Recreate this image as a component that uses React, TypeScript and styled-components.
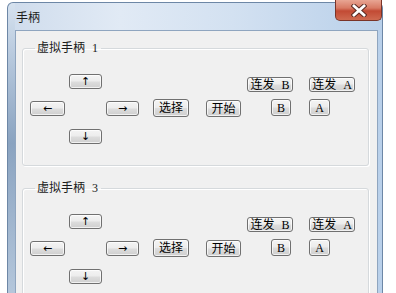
import React from 'react';
import styled, { createGlobalStyle } from 'styled-components';

const GlobalStyle = createGlobalStyle`
    html, body {
        margin: 0;
        padding: 0;
        background: #ffffff;
        overflow: hidden;
    }
`;

const Page = styled.div`
    width: 396px;
    height: 293px;
    padding: 2px 0 0 7px;
    box-sizing: border-box;
`;

const Window = styled.div`
    position: relative;
    width: 376px;
    height: 310px;
    display: flex;
    flex-direction: column;
    border: 1px solid #6d87a6;
    border-bottom: none;
    border-radius: 6px 6px 0 0;
    box-sizing: border-box;
    background:
        linear-gradient(180deg, #d6e2ef 0px, #b4c6db 60px, #8aa3c0 140px, #b7c9dd 300px) left top / 7px 100% no-repeat,
        linear-gradient(90deg, #cfdcec 0%, #e1eaf5 30%, #d3e1f1 60%, #b9d0ea 100%);
`;

const TitleBar = styled.div`
    height: 27px;
    display: flex;
    align-items: center;
    padding-left: 8px;
    font-family: 'Noto Sans CJK SC', sans-serif;
    font-size: 12px;
    color: #1e1e1e;
`;

const CloseButton = styled.div`
    position: absolute;
    top: -3px;
    right: 0;
    width: 47px;
    height: 21px;
    box-sizing: border-box;
    border: 1px solid #7a3428;
    border-top: none;
    border-radius: 0 0 5px 5px;
    background: linear-gradient(180deg, #e8a593 0%, #d87a64 40%, #c24a34 55%, #cf6a50 100%);
    display: flex;
    justify-content: center;
    align-items: center;
`;

const Client = styled.div`
    flex: 1;
    margin: 0 4px 0 7px;
    background: #f0f0f0;
    border: 1px solid #8fa5bf;
    border-bottom: none;
    padding: 10px 8px 0 6px;
    display: flex;
    flex-direction: column;
    gap: 15px;
`;

const Group = styled.fieldset`
    margin: 0;
    padding: 19px 0 21px 7px;
    border: 1px solid #d5d9dc;
    border-radius: 3px;
    box-shadow: inset 1px 1px 0 #ffffff, 1px 1px 0 #ffffff;
    min-width: 0;
`;

const Legend = styled.legend`
    margin-left: 5px;
    padding: 0 3px 0 2px;
    font-family: 'Liberation Serif', 'Noto Sans CJK SC', serif;
    font-size: 12px;
    line-height: 14px;
    word-spacing: 4px;
    color: #1a1a1a;
`;

const Pad = styled.div`
    display: flex;
    align-items: flex-start;
`;

const DPad = styled.div`
    display: grid;
    grid-template-columns: 35px 33px 33px;
    grid-template-rows: 15px 16px 15px;
    column-gap: 4px;
    row-gap: 12px;
`;

const Slot = styled.div<{ $col: number; $row: number }>`
    grid-column: ${(p) => p.$col};
    grid-row: ${(p) => p.$row};
    display: flex;
`;

const Button = styled.div<{ $w: number; $h: number }>`
    width: ${(p) => p.$w}px;
    height: ${(p) => p.$h}px;
    box-sizing: border-box;
    border: 1px solid #707070;
    border-radius: 3px;
    background: linear-gradient(180deg, #f4f4f4 0%, #ececec 48%, #dddddd 52%, #cfcfcf 100%);
    box-shadow: inset 0 0 0 1px rgba(255, 255, 255, 0.7);
    display: flex;
    justify-content: center;
    align-items: center;
    font-family: 'Liberation Serif', 'Noto Sans CJK SC', serif;
    font-size: 12px;
    line-height: 1;
    word-spacing: 4px;
    color: #000000;
    white-space: pre;
`;

const Arrow = styled.span`
    font-family: 'DejaVu Sans', sans-serif;
    font-size: 11px;
    line-height: 1;
`;

const Action = styled.div<{ $left: number; $top: number }>`
    margin-left: ${(p) => p.$left}px;
    margin-top: ${(p) => p.$top}px;
`;

const Turbo = styled.div`
    margin-left: 6px;
    margin-top: 3px;
    display: grid;
    grid-template-columns: 46px 46px;
    grid-template-rows: 15px 17px;
    column-gap: 16px;
    row-gap: 7px;
`;

const TurboCell = styled.div<{ $end?: boolean }>`
    display: flex;
    justify-content: ${(p) => (p.$end ? 'flex-end' : 'flex-start')};
    padding-right: ${(p) => (p.$end ? 2 : 0)}px;
`;

function CloseIcon() {
    return (
        <svg width="16" height="13" viewBox="0 0 16 13">
            <path d="M3 2 L13 11 M13 2 L3 11" stroke="#5a2a22" strokeWidth="4.8" strokeLinecap="square" />
            <path d="M3 2 L13 11 M13 2 L3 11" stroke="#ffffff" strokeWidth="2.8" strokeLinecap="square" />
        </svg>
    );
}

function Gamepad(props: { title: string }) {
    return (
        <Group>
            <Legend>{props.title}</Legend>
            <Pad>
                <DPad>
                    <Slot $col={2} $row={1}>
                        <Button $w={33} $h={15}>
                            <Arrow>↑</Arrow>
                        </Button>
                    </Slot>
                    <Slot $col={1} $row={2}>
                        <Button $w={35} $h={15}>
                            <Arrow>←</Arrow>
                        </Button>
                    </Slot>
                    <Slot $col={3} $row={2}>
                        <Button $w={33} $h={15}>
                            <Arrow>→</Arrow>
                        </Button>
                    </Slot>
                    <Slot $col={2} $row={3}>
                        <Button $w={33} $h={15}>
                            <Arrow>↓</Arrow>
                        </Button>
                    </Slot>
                </DPad>
                <Action $left={14} $top={25}>
                    <Button $w={36} $h={18}>选择</Button>
                </Action>
                <Action $left={17} $top={26}>
                    <Button $w={35} $h={17}>开始</Button>
                </Action>
                <Turbo>
                    <TurboCell>
                        <Button $w={46} $h={15}>连发 B</Button>
                    </TurboCell>
                    <TurboCell>
                        <Button $w={46} $h={15}>连发 A</Button>
                    </TurboCell>
                    <TurboCell $end>
                        <Button $w={20} $h={17}>B</Button>
                    </TurboCell>
                    <TurboCell>
                        <Button $w={21} $h={17}>A</Button>
                    </TurboCell>
                </Turbo>
            </Pad>
        </Group>
    );
}

export default function App() {
    return (
        <Page>
            <GlobalStyle />
            <Window>
                <TitleBar>手柄</TitleBar>
                <CloseButton>
                    <CloseIcon />
                </CloseButton>
                <Client>
                    <Gamepad title="虚拟手柄 1" />
                    <Gamepad title="虚拟手柄 3" />
                </Client>
            </Window>
        </Page>
    );
}
